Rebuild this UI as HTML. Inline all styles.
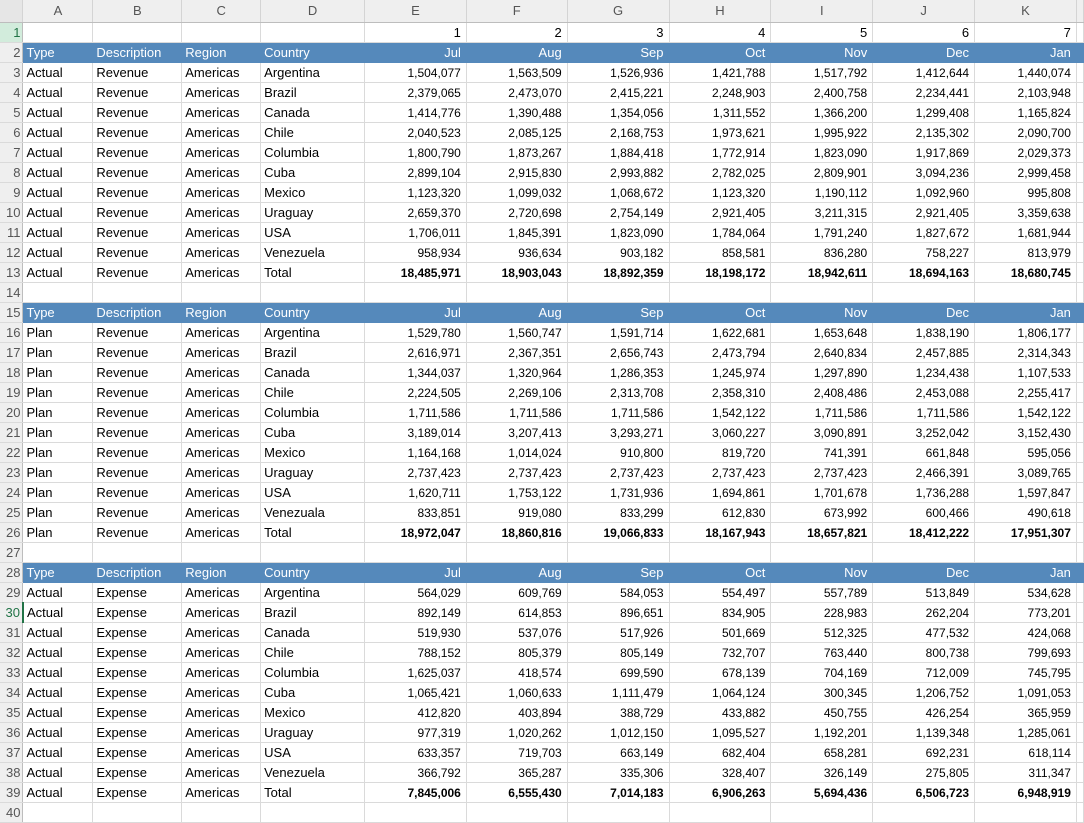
<!DOCTYPE html>
<html><head><meta charset="utf-8"><style>
body{margin:0;background:#fff;width:1084px;height:809px;overflow:hidden;font-family:"Liberation Sans",sans-serif}
table{border-collapse:collapse;table-layout:fixed;position:absolute;left:0;top:0}
td{height:19px;box-sizing:border-box;padding:1px 3px 0 3px;border-right:1px solid #dadada;border-bottom:1px solid #dadada;font-size:13px;color:#000;white-space:nowrap;overflow:hidden;line-height:18px;vertical-align:bottom}
tr{height:20px}
td.n{text-align:right;font-size:12px;padding-right:5px}
tr.b td.n{font-weight:bold}
tr.ch{height:22px}
tr.ch td{height:22px;padding:0;background:#efefef;color:#555;text-align:center;font-size:13px;border-right:1px solid #d4d4d4;border-bottom:1px solid #bdbdbd;vertical-align:middle}
td.rh{background:#efefef;color:#555;text-align:right;padding:1px 2px 0 0;border-right:1px solid #bdbdbd;border-bottom:1px solid #dadada;font-size:13px}
tr.h td:not(.rh){background:#5589bb;color:#fff;border-color:#5589bb}
tr.h td.n{font-size:13px}
</style></head><body>
<table>
<colgroup><col style="width:23px"><col style="width:70px"><col style="width:89px"><col style="width:79px"><col style="width:104px"><col style="width:102px"><col style="width:101px"><col style="width:102px"><col style="width:102px"><col style="width:102px"><col style="width:102px"><col style="width:102px"><col style="width:6px"></colgroup>
<tr class="ch"><td style="background:#e6e6e6"></td><td>A</td><td>B</td><td>C</td><td>D</td><td>E</td><td>F</td><td>G</td><td>H</td><td>I</td><td>J</td><td>K</td><td></td></tr>
<tr><td class="rh" style="background:#d2ecdc;color:#217346">1</td><td></td><td></td><td></td><td></td><td class="n" style="font-size:13px">1</td><td class="n" style="font-size:13px">2</td><td class="n" style="font-size:13px">3</td><td class="n" style="font-size:13px">4</td><td class="n" style="font-size:13px">5</td><td class="n" style="font-size:13px">6</td><td class="n" style="font-size:13px">7</td><td></td></tr>
<tr class="h"><td class="rh">2</td><td>Type</td><td>Description</td><td>Region</td><td>Country</td><td class="n">Jul</td><td class="n">Aug</td><td class="n">Sep</td><td class="n">Oct</td><td class="n">Nov</td><td class="n">Dec</td><td class="n">Jan</td><td></td></tr>
<tr><td class="rh">3</td><td>Actual</td><td>Revenue</td><td>Americas</td><td>Argentina</td><td class="n">1,504,077</td><td class="n">1,563,509</td><td class="n">1,526,936</td><td class="n">1,421,788</td><td class="n">1,517,792</td><td class="n">1,412,644</td><td class="n">1,440,074</td><td></td></tr>
<tr><td class="rh">4</td><td>Actual</td><td>Revenue</td><td>Americas</td><td>Brazil</td><td class="n">2,379,065</td><td class="n">2,473,070</td><td class="n">2,415,221</td><td class="n">2,248,903</td><td class="n">2,400,758</td><td class="n">2,234,441</td><td class="n">2,103,948</td><td></td></tr>
<tr><td class="rh">5</td><td>Actual</td><td>Revenue</td><td>Americas</td><td>Canada</td><td class="n">1,414,776</td><td class="n">1,390,488</td><td class="n">1,354,056</td><td class="n">1,311,552</td><td class="n">1,366,200</td><td class="n">1,299,408</td><td class="n">1,165,824</td><td></td></tr>
<tr><td class="rh">6</td><td>Actual</td><td>Revenue</td><td>Americas</td><td>Chile</td><td class="n">2,040,523</td><td class="n">2,085,125</td><td class="n">2,168,753</td><td class="n">1,973,621</td><td class="n">1,995,922</td><td class="n">2,135,302</td><td class="n">2,090,700</td><td></td></tr>
<tr><td class="rh">7</td><td>Actual</td><td>Revenue</td><td>Americas</td><td>Columbia</td><td class="n">1,800,790</td><td class="n">1,873,267</td><td class="n">1,884,418</td><td class="n">1,772,914</td><td class="n">1,823,090</td><td class="n">1,917,869</td><td class="n">2,029,373</td><td></td></tr>
<tr><td class="rh">8</td><td>Actual</td><td>Revenue</td><td>Americas</td><td>Cuba</td><td class="n">2,899,104</td><td class="n">2,915,830</td><td class="n">2,993,882</td><td class="n">2,782,025</td><td class="n">2,809,901</td><td class="n">3,094,236</td><td class="n">2,999,458</td><td></td></tr>
<tr><td class="rh">9</td><td>Actual</td><td>Revenue</td><td>Americas</td><td>Mexico</td><td class="n">1,123,320</td><td class="n">1,099,032</td><td class="n">1,068,672</td><td class="n">1,123,320</td><td class="n">1,190,112</td><td class="n">1,092,960</td><td class="n">995,808</td><td></td></tr>
<tr><td class="rh">10</td><td>Actual</td><td>Revenue</td><td>Americas</td><td>Uraguay</td><td class="n">2,659,370</td><td class="n">2,720,698</td><td class="n">2,754,149</td><td class="n">2,921,405</td><td class="n">3,211,315</td><td class="n">2,921,405</td><td class="n">3,359,638</td><td></td></tr>
<tr><td class="rh">11</td><td>Actual</td><td>Revenue</td><td>Americas</td><td>USA</td><td class="n">1,706,011</td><td class="n">1,845,391</td><td class="n">1,823,090</td><td class="n">1,784,064</td><td class="n">1,791,240</td><td class="n">1,827,672</td><td class="n">1,681,944</td><td></td></tr>
<tr><td class="rh">12</td><td>Actual</td><td>Revenue</td><td>Americas</td><td>Venezuela</td><td class="n">958,934</td><td class="n">936,634</td><td class="n">903,182</td><td class="n">858,581</td><td class="n">836,280</td><td class="n">758,227</td><td class="n">813,979</td><td></td></tr>
<tr class="b"><td class="rh">13</td><td>Actual</td><td>Revenue</td><td>Americas</td><td>Total</td><td class="n">18,485,971</td><td class="n">18,903,043</td><td class="n">18,892,359</td><td class="n">18,198,172</td><td class="n">18,942,611</td><td class="n">18,694,163</td><td class="n">18,680,745</td><td></td></tr>
<tr><td class="rh">14</td><td></td><td></td><td></td><td></td><td></td><td></td><td></td><td></td><td></td><td></td><td></td><td></td></tr>
<tr class="h"><td class="rh">15</td><td>Type</td><td>Description</td><td>Region</td><td>Country</td><td class="n">Jul</td><td class="n">Aug</td><td class="n">Sep</td><td class="n">Oct</td><td class="n">Nov</td><td class="n">Dec</td><td class="n">Jan</td><td></td></tr>
<tr><td class="rh">16</td><td>Plan</td><td>Revenue</td><td>Americas</td><td>Argentina</td><td class="n">1,529,780</td><td class="n">1,560,747</td><td class="n">1,591,714</td><td class="n">1,622,681</td><td class="n">1,653,648</td><td class="n">1,838,190</td><td class="n">1,806,177</td><td></td></tr>
<tr><td class="rh">17</td><td>Plan</td><td>Revenue</td><td>Americas</td><td>Brazil</td><td class="n">2,616,971</td><td class="n">2,367,351</td><td class="n">2,656,743</td><td class="n">2,473,794</td><td class="n">2,640,834</td><td class="n">2,457,885</td><td class="n">2,314,343</td><td></td></tr>
<tr><td class="rh">18</td><td>Plan</td><td>Revenue</td><td>Americas</td><td>Canada</td><td class="n">1,344,037</td><td class="n">1,320,964</td><td class="n">1,286,353</td><td class="n">1,245,974</td><td class="n">1,297,890</td><td class="n">1,234,438</td><td class="n">1,107,533</td><td></td></tr>
<tr><td class="rh">19</td><td>Plan</td><td>Revenue</td><td>Americas</td><td>Chile</td><td class="n">2,224,505</td><td class="n">2,269,106</td><td class="n">2,313,708</td><td class="n">2,358,310</td><td class="n">2,408,486</td><td class="n">2,453,088</td><td class="n">2,255,417</td><td></td></tr>
<tr><td class="rh">20</td><td>Plan</td><td>Revenue</td><td>Americas</td><td>Columbia</td><td class="n">1,711,586</td><td class="n">1,711,586</td><td class="n">1,711,586</td><td class="n">1,542,122</td><td class="n">1,711,586</td><td class="n">1,711,586</td><td class="n">1,542,122</td><td></td></tr>
<tr><td class="rh">21</td><td>Plan</td><td>Revenue</td><td>Americas</td><td>Cuba</td><td class="n">3,189,014</td><td class="n">3,207,413</td><td class="n">3,293,271</td><td class="n">3,060,227</td><td class="n">3,090,891</td><td class="n">3,252,042</td><td class="n">3,152,430</td><td></td></tr>
<tr><td class="rh">22</td><td>Plan</td><td>Revenue</td><td>Americas</td><td>Mexico</td><td class="n">1,164,168</td><td class="n">1,014,024</td><td class="n">910,800</td><td class="n">819,720</td><td class="n">741,391</td><td class="n">661,848</td><td class="n">595,056</td><td></td></tr>
<tr><td class="rh">23</td><td>Plan</td><td>Revenue</td><td>Americas</td><td>Uraguay</td><td class="n">2,737,423</td><td class="n">2,737,423</td><td class="n">2,737,423</td><td class="n">2,737,423</td><td class="n">2,737,423</td><td class="n">2,466,391</td><td class="n">3,089,765</td><td></td></tr>
<tr><td class="rh">24</td><td>Plan</td><td>Revenue</td><td>Americas</td><td>USA</td><td class="n">1,620,711</td><td class="n">1,753,122</td><td class="n">1,731,936</td><td class="n">1,694,861</td><td class="n">1,701,678</td><td class="n">1,736,288</td><td class="n">1,597,847</td><td></td></tr>
<tr><td class="rh">25</td><td>Plan</td><td>Revenue</td><td>Americas</td><td>Venezuala</td><td class="n">833,851</td><td class="n">919,080</td><td class="n">833,299</td><td class="n">612,830</td><td class="n">673,992</td><td class="n">600,466</td><td class="n">490,618</td><td></td></tr>
<tr class="b"><td class="rh">26</td><td>Plan</td><td>Revenue</td><td>Americas</td><td>Total</td><td class="n">18,972,047</td><td class="n">18,860,816</td><td class="n">19,066,833</td><td class="n">18,167,943</td><td class="n">18,657,821</td><td class="n">18,412,222</td><td class="n">17,951,307</td><td></td></tr>
<tr><td class="rh">27</td><td></td><td></td><td></td><td></td><td></td><td></td><td></td><td></td><td></td><td></td><td></td><td></td></tr>
<tr class="h"><td class="rh">28</td><td>Type</td><td>Description</td><td>Region</td><td>Country</td><td class="n">Jul</td><td class="n">Aug</td><td class="n">Sep</td><td class="n">Oct</td><td class="n">Nov</td><td class="n">Dec</td><td class="n">Jan</td><td></td></tr>
<tr><td class="rh">29</td><td>Actual</td><td>Expense</td><td>Americas</td><td>Argentina</td><td class="n">564,029</td><td class="n">609,769</td><td class="n">584,053</td><td class="n">554,497</td><td class="n">557,789</td><td class="n">513,849</td><td class="n">534,628</td><td></td></tr>
<tr><td class="rh" style="color:#217346">30</td><td style="border-left:2px solid #217346">Actual</td><td>Expense</td><td>Americas</td><td>Brazil</td><td class="n">892,149</td><td class="n">614,853</td><td class="n">896,651</td><td class="n">834,905</td><td class="n">228,983</td><td class="n">262,204</td><td class="n">773,201</td><td></td></tr>
<tr><td class="rh">31</td><td>Actual</td><td>Expense</td><td>Americas</td><td>Canada</td><td class="n">519,930</td><td class="n">537,076</td><td class="n">517,926</td><td class="n">501,669</td><td class="n">512,325</td><td class="n">477,532</td><td class="n">424,068</td><td></td></tr>
<tr><td class="rh">32</td><td>Actual</td><td>Expense</td><td>Americas</td><td>Chile</td><td class="n">788,152</td><td class="n">805,379</td><td class="n">805,149</td><td class="n">732,707</td><td class="n">763,440</td><td class="n">800,738</td><td class="n">799,693</td><td></td></tr>
<tr><td class="rh">33</td><td>Actual</td><td>Expense</td><td>Americas</td><td>Columbia</td><td class="n">1,625,037</td><td class="n">418,574</td><td class="n">699,590</td><td class="n">678,139</td><td class="n">704,169</td><td class="n">712,009</td><td class="n">745,795</td><td></td></tr>
<tr><td class="rh">34</td><td>Actual</td><td>Expense</td><td>Americas</td><td>Cuba</td><td class="n">1,065,421</td><td class="n">1,060,633</td><td class="n">1,111,479</td><td class="n">1,064,124</td><td class="n">300,345</td><td class="n">1,206,752</td><td class="n">1,091,053</td><td></td></tr>
<tr><td class="rh">35</td><td>Actual</td><td>Expense</td><td>Americas</td><td>Mexico</td><td class="n">412,820</td><td class="n">403,894</td><td class="n">388,729</td><td class="n">433,882</td><td class="n">450,755</td><td class="n">426,254</td><td class="n">365,959</td><td></td></tr>
<tr><td class="rh">36</td><td>Actual</td><td>Expense</td><td>Americas</td><td>Uraguay</td><td class="n">977,319</td><td class="n">1,020,262</td><td class="n">1,012,150</td><td class="n">1,095,527</td><td class="n">1,192,201</td><td class="n">1,139,348</td><td class="n">1,285,061</td><td></td></tr>
<tr><td class="rh">37</td><td>Actual</td><td>Expense</td><td>Americas</td><td>USA</td><td class="n">633,357</td><td class="n">719,703</td><td class="n">663,149</td><td class="n">682,404</td><td class="n">658,281</td><td class="n">692,231</td><td class="n">618,114</td><td></td></tr>
<tr><td class="rh">38</td><td>Actual</td><td>Expense</td><td>Americas</td><td>Venezuela</td><td class="n">366,792</td><td class="n">365,287</td><td class="n">335,306</td><td class="n">328,407</td><td class="n">326,149</td><td class="n">275,805</td><td class="n">311,347</td><td></td></tr>
<tr class="b"><td class="rh">39</td><td>Actual</td><td>Expense</td><td>Americas</td><td>Total</td><td class="n">7,845,006</td><td class="n">6,555,430</td><td class="n">7,014,183</td><td class="n">6,906,263</td><td class="n">5,694,436</td><td class="n">6,506,723</td><td class="n">6,948,919</td><td></td></tr>
<tr><td class="rh">40</td><td></td><td></td><td></td><td></td><td></td><td></td><td></td><td></td><td></td><td></td><td></td><td></td></tr>
</table>
</body></html>
